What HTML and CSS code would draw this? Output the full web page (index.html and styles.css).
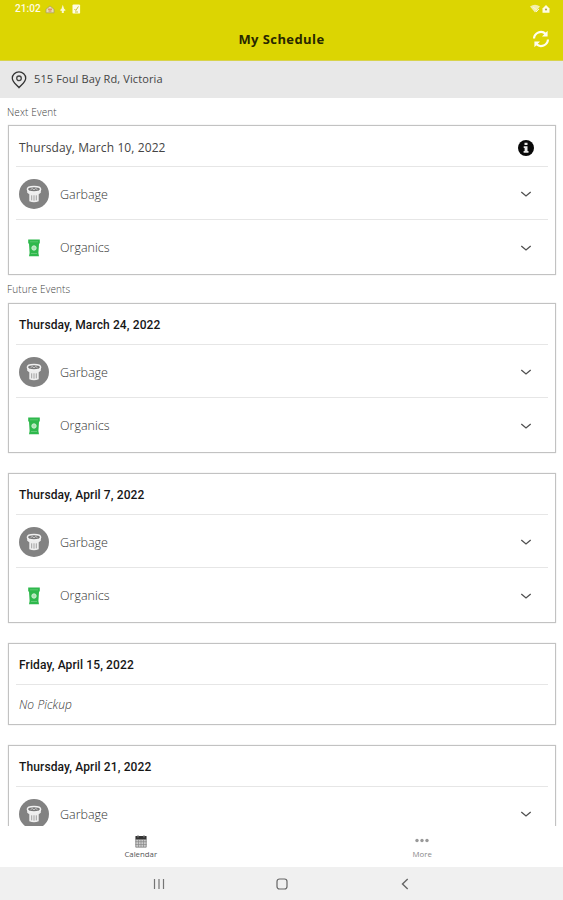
FILE: index.html
```
<!DOCTYPE html>
<html lang="en">
<head>
<meta charset="utf-8">
<title>My Schedule</title>
<link rel="stylesheet" href="styles.css">
</head>
<body>
<svg class="defs" aria-hidden="true">
  <symbol id="bin" viewBox="0 0 30 30">
    <circle cx="15" cy="15" r="15" fill="#828282"/>
    <path d="M8.200 11v2.700l2.100 1.500v7q4.700 2 9.400 0v-7l2.100-1.500V11z" fill="#eee"/>
    <ellipse cx="15" cy="10.300" rx="6.600" ry="2.700" fill="#777" stroke="#f2f2f2" stroke-width="1.500"/>
    <path d="m11.500 10.800 1.700-1.300 1.800 1.300 1.800-1.300 1.700 1.300" fill="none" stroke="#ddd" stroke-width=".8"/>
    <path d="M12.700 16.300v5M15 16.300v5.400M17.300 16.300v5" stroke="#999" stroke-width=".9"/>
  </symbol>
  <symbol id="organics" viewBox="0 0 30 30">
    <path d="M9.200 6.500h11.600v3.800l-.8.500-.6 9.200.6 3.200H10l.6-3.200-.6-9.200-.8-.5z" fill="#2eb84c"/>
    <path d="M11 8.800h8" stroke="#64cb78" stroke-width=".8"/>
    <circle cx="15" cy="15" r="2.200" fill="#a9e4b3" stroke="#d5f1da" stroke-width=".9"/>
    <path d="M12 20.500h6" stroke="#62c976" stroke-width="1"/>
  </symbol>
  <symbol id="chevron" viewBox="0 0 12 8">
    <path d="M1.300 2 6 6l4.700-4" fill="none" stroke="#505050" stroke-width="1.300"/>
  </symbol>
</svg>

<header class="top">
  <div class="status">
    <span class="clock">21:02</span>
    <svg class="notices" viewBox="0 0 36 12">
      <path d="M1 6.200 5 3l4 3.200v3.600H1z" fill="#e9dfb0" stroke="#a79b64" stroke-width=".7"/><path d="M3 6.200h4M3.500 8h3" stroke="#d66f55" stroke-width="1"/>
      <path d="m17.800 1.800 1.300 4 1.700 1.500-2 .8v2h-2v-2l-2-.8 1.700-1.500z" fill="#faf9cf"/>
      <rect x="27.500" y="1.400" width="7.600" height="9.200" rx="1.200" fill="#fffce7"/><path d="m29.500 6 1.300 1.500 2.600-4M30 9h3" fill="none" stroke="#cbc338" stroke-width="1"/>
    </svg>
    <svg class="signals" viewBox="0 0 20 10">
      <path d="M0 2.500q5-3.500 10 0L5 8.500z" fill="#f3efaa"/><path d="m3 3 5 4M6 8l3-3" stroke="#f9f7d5" stroke-width="1"/>
      <path d="M12.500 4.500 16 1l3.500 3.500v4.300h-7z" fill="#fffce5"/><circle cx="16" cy="5.500" r="1.100" fill="#a9a44c"/>
    </svg>
  </div>
  <div class="titlebar">
    <h1>My Schedule</h1>
    <svg class="refresh" viewBox="0 0 18 18">
      <g fill="none" stroke="#fffef0" stroke-width="2.200"><path d="M2 8.500A7 7 0 0 1 13.600 3.800"/><path d="M16 9.500A7 7 0 0 1 4.400 14.200"/></g>
      <path d="M15.600.8v5.600H10zM2.400 17.200v-5.600H8z" fill="#fffef0"/>
    </svg>
  </div>
</header>

<div class="address">
  <svg class="pin" viewBox="0 0 16 18"><path d="M8 16.700C5.600 13.600 1.300 11 1.300 7.200a6.700 6.300 0 0 1 13.400 0C14.700 11 10.400 13.600 8 16.700z" fill="none" stroke="#333" stroke-width="1.300"/><circle cx="8" cy="7.300" r="2.300" fill="none" stroke="#444" stroke-width="1.300"/></svg>
  <span>515 Foul Bay Rd, Victoria</span>
</div>

<main class="events">
  <h2>Next Event</h2>
  <section class="card next">
    <div class="date"><span>Thursday, March 10, 2022</span>
      <svg class="info" viewBox="0 0 16 16"><circle cx="8" cy="8" r="8" fill="#080808"/><path d="M6.500 2.800h3v2.300h-3zM5.700 6.300h3.800v4.800h1v1.700H5.600v-1.700h1V8h-.9z" fill="#e9e9e9"/></svg>
    </div>
    <div class="row"><svg class="type"><use href="#bin"/></svg><span>Garbage</span><svg class="chev"><use href="#chevron"/></svg></div>
    <div class="row last"><svg class="type"><use href="#organics"/></svg><span>Organics</span><svg class="chev"><use href="#chevron"/></svg></div>
  </section>
  <h2 class="future">Future Events</h2>
  <section class="card">
    <div class="date"><span>Thursday, March 24, 2022</span></div>
    <div class="row"><svg class="type"><use href="#bin"/></svg><span>Garbage</span><svg class="chev"><use href="#chevron"/></svg></div>
    <div class="row last"><svg class="type"><use href="#organics"/></svg><span>Organics</span><svg class="chev"><use href="#chevron"/></svg></div>
  </section>
  <section class="card">
    <div class="date"><span>Thursday, April 7, 2022</span></div>
    <div class="row"><svg class="type"><use href="#bin"/></svg><span>Garbage</span><svg class="chev"><use href="#chevron"/></svg></div>
    <div class="row last"><svg class="type"><use href="#organics"/></svg><span>Organics</span><svg class="chev"><use href="#chevron"/></svg></div>
  </section>
  <section class="card">
    <div class="date"><span>Friday, April 15, 2022</span></div>
    <div class="none"><span>No Pickup</span></div>
  </section>
  <section class="card">
    <div class="date"><span>Thursday, April 21, 2022</span></div>
    <div class="row"><svg class="type"><use href="#bin"/></svg><span>Garbage</span><svg class="chev"><use href="#chevron"/></svg></div>
  </section>
</main>

<nav class="tabs">
  <div class="tab active"><svg viewBox="0 0 12 13"><path d="M.5 1.500h11v10.800H.5z" fill="#ccc"/><path d="M.5 1h11v3.500H.5z" fill="#333"/><path d="M3 0v2.500M9 0v2.500" stroke="#888"/><path d="M.5 6.700h11M.5 9.500h11M3.500 5v7M6 5v7M8.500 5v7" stroke="#888" stroke-width=".7"/><path d="M.8 4v8.200h10.400V4" fill="none" stroke="#777" stroke-width=".7"/></svg><span>Calendar</span></div>
  <div class="tab"><svg class="dots" viewBox="0 0 14 13"><g fill="#999"><circle cx="2" cy="5.500" r="1.700"/><circle cx="7" cy="5.500" r="1.700"/><circle cx="12" cy="5.500" r="1.700"/></g></svg><span>More</span></div>
</nav>

<footer class="system">
  <svg viewBox="0 0 12 12"><path d="M1.500 1v10M6 1v10M10.500 1v10" stroke="#757575" stroke-width="1.200"/></svg>
  <svg viewBox="0 0 12 12"><rect x="1" y="1" width="10" height="10" rx="2.500" fill="none" stroke="#666" stroke-width="1.200"/></svg>
  <svg viewBox="0 0 12 12"><path d="M8.700 1 3.500 6l5.200 5" fill="none" stroke="#666" stroke-width="1.400"/></svg>
</footer>
</body>
</html>
```
FILE: styles.css
```
* { box-sizing: border-box; }
body {
  margin: 0;
  height: 900px;
  display: flex;
  flex-direction: column;
  overflow: hidden;
  background: #fff;
  font-family: "Open Sans", "Noto Sans", sans-serif;
}
svg { display: block; flex: none; }
.defs { display: none; }
.top { height: 61px; flex: none; background: #dcd502; border-bottom: 1px solid #d8d34b; }
.status { height: 18px; padding: 0 13px 0 15px; display: flex; align-items: center; }
.clock { width: 30px; font: 500 10px/18px Roboto, sans-serif; color: #fffce5; letter-spacing: .1px; }
.notices { width: 36px; height: 12px; }
.signals { width: 20px; height: 10px; margin-left: auto; }
.titlebar { height: 42px; display: grid; grid-template-columns: 1fr auto 1fr; align-items: center; padding: 0 13px; }
h1 { grid-column: 2; margin: 0; font-size: 13px; line-height: 18px; font-weight: 700; letter-spacing: .42px; color: #282700; }
.refresh { width: 18px; height: 18px; justify-self: end; }
.address { height: 37px; flex: none; display: flex; align-items: center; gap: 7px; padding: 0 11px; background: #e8e8e8; font-size: 11px; letter-spacing: .12px; color: #444; }
.address span { padding-bottom: 2px; }
.pin { width: 16px; height: 18px; }
.events { height: 728px; flex: none; overflow: hidden; }
h2 { margin: 0; padding: 5px 7px 0; height: 27px; font-size: 10px; line-height: 18px; font-weight: 300; letter-spacing: .13px; color: #444; }
h2.future { height: 28px; }
.card { margin: 0 7px 20px 8px; border: 1px solid #c2c2c2; padding: 0 7px; box-shadow: 0 0 1px #ccc; }
.card.next { margin-bottom: 0; }
.date, .row { display: flex; align-items: center; justify-content: space-between; border-bottom: 1px solid #e6e6e6; }
.date { height: 41px; padding: 2px 14px 0 3px; font: 500 12px/18px Roboto, sans-serif; letter-spacing: .12px; color: #161616; }
.next .date { padding-top: 3px; font: 400 12px/18px "Open Sans", sans-serif; letter-spacing: .1px; color: #444; }
.info { width: 16px; height: 16px; }
.row { height: 53px; padding: 2px 16px 0 3px; font-size: 12.5px; font-weight: 300; color: #333; }
.row.last { height: 54px; border: 0; padding-top: 1px; }
.type { width: 30px; height: 30px; margin-right: 11px; }
.chev { width: 12px; height: 8px; margin-left: auto; }
.none { height: 39px; padding: 0 3px; display: flex; align-items: center; font-size: 12px; font-style: italic; font-weight: 300; letter-spacing: .1px; color: #333; }
.tabs { height: 41px; flex: none; display: grid; grid-template-columns: 1fr 1fr; }
.tab { display: flex; flex-direction: column; align-items: center; padding-top: 9px; font-size: 7.8px; line-height: 11px; color: #888; }
.tab svg { width: 12px; height: 13px; margin-bottom: 1px; }
.tab .dots { width: 14px; }
.tab.active { color: #555; }
.system { flex: 1; display: flex; align-items: center; justify-content: center; gap: 111px; padding-top: 1px; background: #f0f0f0; }
.system svg { width: 12px; height: 12px; }
```
